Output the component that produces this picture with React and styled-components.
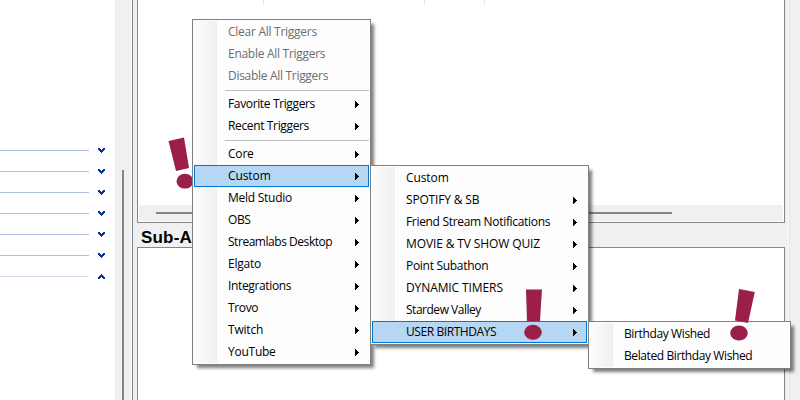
import React from "react";
import styled, { createGlobalStyle } from "styled-components";

const Global = createGlobalStyle`
  * { box-sizing: border-box; }
  body { margin: 0; background: #f0f0f0; overflow: hidden; }
`;

const Window = styled.div`
  position: relative;
  display: flex;
  width: 800px;
  height: 400px;
  overflow: hidden;
  background: #f0f0f0;
  color: #000;
  font-family: "Open Sans", "Noto Sans", sans-serif;
  font-size: 12px;
`;

const Sidebar = styled.aside`
  width: 115px;
  height: 400px;
  padding-top: 140px;
  background: #fff;
`;

const Group = styled.div`
  display: flex;
  align-items: center;
  height: 21px;
  gap: 9px;
`;

const GroupRule = styled.div`
  width: 89px;
  height: 1px;
  background: ${(p) => (p.$faint ? "#d5dff0" : "#b0c0e0")};
`;

const Chevron = styled.svg`
  display: block;
  width: 7px;
  height: 5px;
  fill: #003399;
  transform: ${(p) => (p.$up ? "scaleY(-1)" : "none")};
`;

const ScrollTrack = styled.div`
  width: 16px;
  padding: 170px 0 0 7px;
`;

const ScrollThumb = styled.div`
  width: 2px;
  height: 230px;
  background: #858585;
`;

const Content = styled.main`
  display: flex;
  flex-direction: column;
  width: 658px;
  padding-left: 4px;
  border-left: 1px solid #fff;
  box-shadow: inset 1px 0 #828790;
  border-right: 1px solid #fafafa;
`;

const ListBox = styled.section`
  display: flex;
  flex: none;
  flex-direction: column;
  width: 648px;
  height: ${(p) => p.$height}px;
  margin-left: 1px;
  padding: 1px;
  border: 1px solid #828790;
  border-top-width: ${(p) => (p.$open ? 0 : 1)}px;
  background: #fff;
`;

const Columns = styled.div`
  display: grid;
  flex: 1;
  grid-template-columns: 161px 60px 1px;
  align-content: start;
  margin-top: -1px;
  padding-left: 124px;
`;

const ColumnMark = styled.div`
  width: 1px;
  height: 4px;
  background: #e5e5e5;
`;

const HorizontalTrack = styled.div`
  height: 16px;
  padding: 7px 0 0 17px;
  background: #f0f0f0;
`;

const HorizontalThumb = styled.div`
  width: 516px;
  height: 2px;
  background: #858585;
`;

const Heading = styled.h2`
  flex: none;
  height: 24px;
  margin: 0;
  padding-left: 5px;
  font: bold 17px/29px "Liberation Sans", sans-serif;
  letter-spacing: 0.2px;
`;

const Edge = styled.div`
  flex: 1;
  border-left: 1px solid #e4e4e4;
`;

const Menu = styled.div`
  position: absolute;
  left: ${(p) => p.$x}px;
  top: ${(p) => p.$y}px;
  width: ${(p) => p.$w}px;
  padding: 1px;
  border: 1px solid #808080;
  background: linear-gradient(90deg, #fcfcfc, #f0f0f0) 1px 1px / 23px calc(100% - 2px) no-repeat #fdfdfd;
  box-shadow: 4px 4px 3px -1px rgba(0, 0, 0, 0.5);
`;

const Item = styled.div`
  display: flex;
  align-items: center;
  justify-content: space-between;
  height: 22px;
  padding: 0 9px 0 33px;
  border: 1px solid ${(p) => (p.$active ? "#0078d7" : "transparent")};
  background: ${(p) => (p.$active ? "#b5d7f3" : "transparent")};
  color: ${(p) => (p.$disabled ? "#6d6d6d" : "#000")};
`;

const Label = styled.span`
  line-height: 20px;
  white-space: nowrap;
  letter-spacing: ${(p) => p.$tracking}px;
`;

const Arrow = styled.svg`
  display: block;
  width: 4px;
  height: 8px;
  margin-top: 2px;
`;

const Separator = styled.div`
  height: 1px;
  margin: 3px 0 2px 31px;
  background: #bdbdbd;
`;

const Mark = styled.svg`
  position: absolute;
  left: ${(p) => p.$x}px;
  top: ${(p) => p.$y}px;
  width: 40px;
  height: 60px;
  fill: #9b1f4a;
`;

const triggers = [
  { t: "Clear All Triggers", off: true, ls: -0.27 },
  { t: "Enable All Triggers", off: true, ls: -0.28 },
  { t: "Disable All Triggers", off: true, ls: -0.3 },
  null,
  { t: "Favorite Triggers", sub: true, ls: -0.36 },
  { t: "Recent Triggers", sub: true, ls: -0.36 },
  null,
  { t: "Core", sub: true, ls: -0.2 },
  { t: "Custom", sub: true, on: true, ls: -0.1 },
  { t: "Meld Studio", sub: true, ls: -0.26 },
  { t: "OBS", sub: true, ls: -0.4 },
  { t: "Streamlabs Desktop", sub: true, ls: -0.46 },
  { t: "Elgato", sub: true, ls: -0.25 },
  { t: "Integrations", sub: true, ls: -0.35 },
  { t: "Trovo", sub: true, ls: -0.35 },
  { t: "Twitch", sub: true, ls: -0.2 },
  { t: "YouTube", sub: true, ls: -0.25 },
];

const custom = [
  { t: "Custom", ls: -0.1 },
  { t: "SPOTIFY & SB", sub: true, ls: -0.17 },
  { t: "Friend Stream Notifications", sub: true, ls: -0.32 },
  { t: "MOVIE & TV SHOW QUIZ", sub: true, ls: -0.12 },
  { t: "Point Subathon", sub: true, ls: -0.3 },
  { t: "DYNAMIC TIMERS", sub: true, ls: -0.1 },
  { t: "Stardew Valley", sub: true, ls: -0.48 },
  { t: "USER BIRTHDAYS", sub: true, on: true, ls: -0.42 },
];

const birthdays = [
  { t: "Birthday Wished", ls: -0.38 },
  { t: "Belated Birthday Wished", ls: -0.4 },
];

function ContextMenu({ items, x, y, w }) {
  return (
    <Menu $x={x} $y={y} $w={w}>
      {items.map((item, i) =>
        item ? (
          <Item key={i} $active={item.on} $disabled={item.off}>
            <Label $tracking={item.ls || 0}>{item.t}</Label>
            {item.sub && (
              <Arrow viewBox="0 0 4 8" shapeRendering="crispEdges">
                <path d="M0 0h1v1h1v1h1v1h1v1H3v1H2v1H1v1H0Z" />
              </Arrow>
            )}
          </Item>
        ) : (
          <Separator key={i} />
        )
      )}
    </Menu>
  );
}

export default function App() {
  return (
    <>
      <Global />
      <Window>
        <Sidebar>
          {[0, 1, 2, 3, 4, 5, 6].map((n) => (
            <Group key={n}>
              <GroupRule $faint={n === 6} />
              <Chevron viewBox="0 0 7 5" $up={n === 6} shapeRendering="crispEdges">
                <path d="M0 0h2v1h1v1h1V1h1V0h2v2H6v1H5v1H4v1H3V4H2V3H1V2H0Z" />
              </Chevron>
            </Group>
          ))}
        </Sidebar>
        <ScrollTrack>
          <ScrollThumb />
        </ScrollTrack>
        <Content>
          <ListBox $height={223} $open>
            <Columns>
              <ColumnMark />
              <ColumnMark />
              <ColumnMark />
            </Columns>
            <HorizontalTrack>
              <HorizontalThumb />
            </HorizontalTrack>
          </ListBox>
          <Heading>Sub-A</Heading>
          <ListBox $height={160} />
        </Content>
        <Edge />
        <Mark $x={160} $y={130} viewBox="160 130 40 60">
          <path d="M168.5 141L184 137.5L189 168L176 171Z" />
          <ellipse cx="185" cy="181.2" rx="8.5" ry="7.4" />
        </Mark>
        <ContextMenu items={triggers} x={192} y={19} w={179} />
        <ContextMenu items={custom} x={370} y={165} w={219} />
        <ContextMenu items={birthdays} x={588} y={321} w={203} />
        <Mark $x={515} $y={285} viewBox="515 285 40 60">
          <path d="M526 289.5H542L540 321H527Z" />
          <ellipse cx="533" cy="332.3" rx="8.8" ry="7.5" />
        </Mark>
        <Mark $x={720} $y={285} viewBox="720 285 40 60">
          <path d="M739 289L754.8 292L748 323L735 320.5Z" />
          <ellipse cx="739" cy="333" rx="8.8" ry="7.5" />
        </Mark>
      </Window>
    </>
  );
}
